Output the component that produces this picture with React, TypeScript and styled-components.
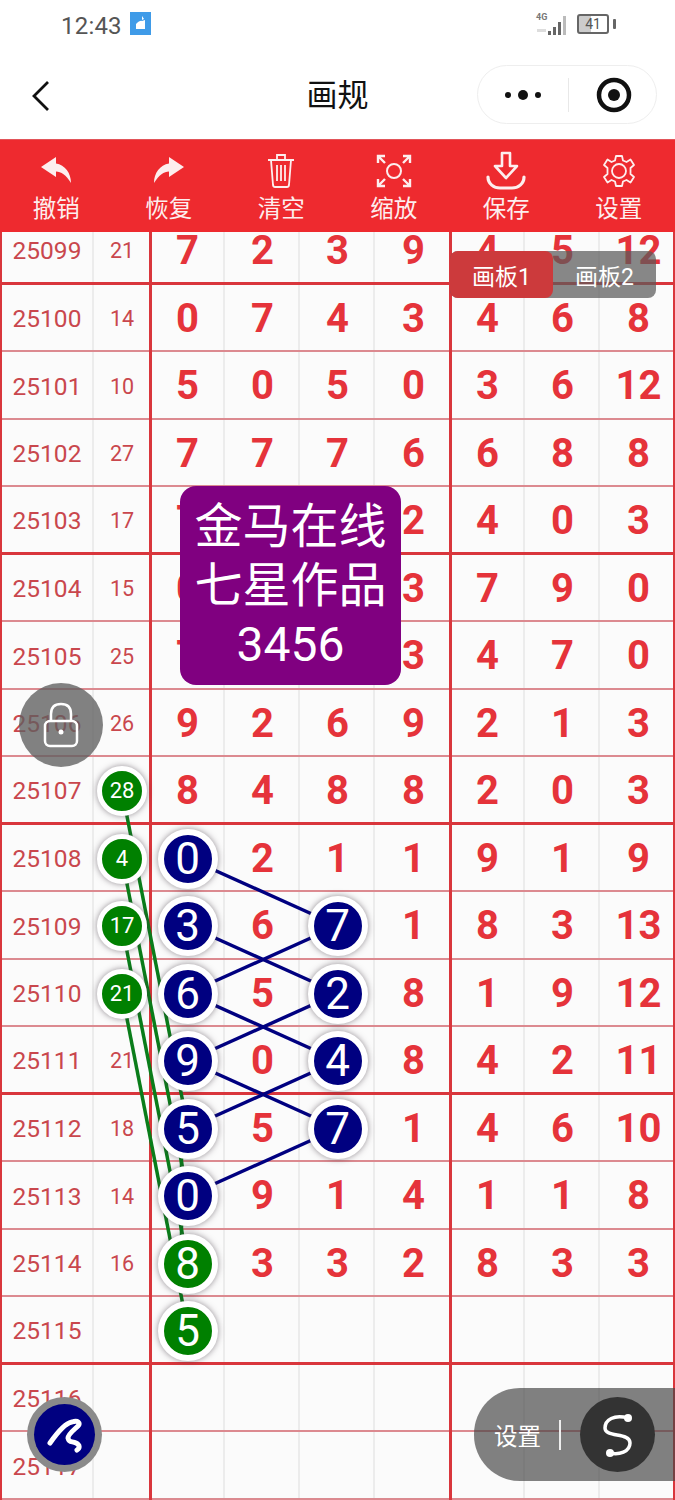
import React from "react";
import styled, { createGlobalStyle } from "styled-components";

const ROW_H = 67.5;
const Global = createGlobalStyle`
  html, body { margin: 0; padding: 0; background: #fff; }
  body { width: 675px; height: 1500px; overflow: hidden; font-family: Roboto, "Noto Sans CJK SC", sans-serif; }
  * { box-sizing: border-box; }
`;

const Page = styled.div`
  position: relative; width: 675px; height: 1500px; display: flex; flex-direction: column; overflow: hidden;
`;
const StatusBar = styled.div`
  height: 52px; flex: none; display: flex; align-items: center; padding: 0 59px 0 61px; color: #555;
`;
const Time = styled.span` font-size: 24px; line-height: 1; letter-spacing: .2px; `;
const AppBadge = styled.span`
  width: 21px; height: 23px; margin-left: 8px; background: #3f9be8; display: flex; align-items: center; justify-content: center; margin-top: -6px;
`;
const StatusRight = styled.div` margin-left: auto; display: flex; align-items: center; gap: 8px; margin-top: -4px; `;
const Signal = styled.div` position: relative; width: 34px; height: 24px; `;
const Tag4G = styled.span`
  position: absolute; left: 1px; top: 0; font-size: 9px; font-weight: 700; line-height: 11px; color: #777;
`;
const Battery = styled.div`
  width: 32px; height: 20px; border: 2px solid #666; border-radius: 3px; display: flex; align-items: center; justify-content: center;
  font-size: 14px; line-height: 1; color: #555; background: linear-gradient(90deg, #ccc 0 42%, #fff 42%);
`;
const BatteryNub = styled.span` width: 3px; height: 10px; background: #666; margin-left: -4px; border-radius: 1px; `;

const NavBar = styled.div`
  height: 87px; flex: none; display: flex; align-items: center; position: relative; padding: 0 18px 0 32px;
`;
const Title = styled.div`
  position: absolute; left: 0; right: 0; top: 24px; text-align: center; font-size: 31px; line-height: 40px; color: #111; font-weight: 400;
`;
const Capsule = styled.div`
  margin-left: auto; width: 180px; height: 59px; margin-top: -2px; border: 1px solid #eee; border-radius: 30px; display: flex; align-items: center;
`;
const CapsuleLeft = styled.div` width: 90px; flex: none; display: flex; align-items: center; justify-content: center; `;
const CapsuleRight = styled.div` flex: 1; display: flex; align-items: center; justify-content: center; padding-left: 3px; `;
const CapsuleSep = styled.div` width: 1px; height: 34px; background: #e8e8e8; `;

const Toolbar = styled.div`
  height: 93px; flex: none; background: #ee2a2f; display: grid; grid-template-columns: repeat(6, 1fr); padding-top: 11px; border-top: 1px solid #e2555a;
`;
const ToolItem = styled.div` display: flex; flex-direction: column; align-items: center; color: #fdeeee; `;
const ToolIcon = styled.div` height: 39px; width: 44px; display: flex; align-items: center; justify-content: center; `;
const ToolLabel = styled.div` font-size: 23.5px; line-height: 30px; margin-top: 4px; `;

const Viewport = styled.div` flex: 1; overflow: hidden; position: relative; background: #fbfbfb; `;
const Board = styled.div` position: relative; margin-top: -15px; `;
const Row = styled.div<{ $thick?: boolean }>`
  height: ${ROW_H}px; display: grid; grid-template-columns: 94px 56px repeat(7, 75px);
  border-bottom: ${(p) => (p.$thick ? "3px solid #d9363c" : "2px solid #dc8a90")};
`;
const Cell = styled.div<{ $edge?: boolean }>`
  position: relative; display: flex; align-items: center; justify-content: center; padding: 3px 0 0 2px;
  border-right: 2px solid #ececec;
  ${(p) => p.$edge && `
    border-right: none;
    &::after { content: ""; position: absolute; right: -2px; top: 0; bottom: -3px; width: 3px; background: #d9363c; z-index: 1; }
  `}
`;
const IssueCell = styled(Cell)`
  font-size: 24.5px; color: #c9474d;
  &::before { content: ""; position: absolute; left: 0; top: 0; bottom: -3px; width: 2px; background: #d9363c; }
`;
const SumCell = styled(Cell)` font-size: 21.5px; color: #c9474d; padding-left: 0; `;
const Digit = styled.span` font-size: 40px; font-weight: 700; color: #e5333a; line-height: 1; `;
const LastCell = styled(Cell)`
  border-right: none;
  &::after { content: ""; position: absolute; right: 0; top: 0; bottom: -3px; width: 2px; background: #d9363c; }
`;
const Ball = styled.span<{ $color: string; $small?: boolean }>`
  position: relative; z-index: 3; flex: none; display: flex; align-items: center; justify-content: center; border-radius: 50%;
  width: ${(p) => (p.$small ? 50 : 60)}px; height: ${(p) => (p.$small ? 50 : 60)}px;
  margin: 0 -5px;
  border: ${(p) => (p.$small ? 5 : 6)}px solid #fff; background: ${(p) => p.$color}; color: #fff;
  font-size: ${(p) => (p.$small ? 22 : 44)}px; line-height: 1; box-shadow: 0 0 6px rgba(60, 50, 60, .55);
`;
const Chart = styled.svg` position: absolute; left: 0; top: 0; z-index: 2; pointer-events: none; `;

const Stamp = styled.div`
  position: absolute; z-index: 5; left: 180px; top: 269px; width: 221px; height: 199px; border-radius: 16px; background: #800080; color: #fff;
  display: flex; flex-direction: column; align-items: center; justify-content: center; font-size: 48px; line-height: 59px;
`;
const Tabs = styled.div`
  position: absolute; z-index: 6; left: 450px; top: 19px; width: 206px; height: 47px; border-radius: 8px; background: rgba(90, 90, 90, .72); display: flex;
`;
const Tab = styled.div<{ $active?: boolean }>`
  flex: 1; display: flex; align-items: center; justify-content: center; font-size: 23px; color: #fff; border-radius: 8px;
  ${(p) => p.$active && "background: #cc3a3c; flex: none; width: 103px;"}
`;
const LockFab = styled.div`
  position: absolute; z-index: 6; left: 19px; top: 683px; width: 84px; height: 84px; border-radius: 50%; background: rgba(95, 95, 95, .78);
  display: flex; align-items: center; justify-content: center;
`;
const PenFab = styled.div`
  position: absolute; z-index: 6; left: 27px; top: 1397px; width: 75px; height: 75px; border-radius: 50%; background: #8a8a8a;
  display: flex; align-items: center; justify-content: center;
`;
const PenDisc = styled.div` width: 61px; height: 61px; border-radius: 50%; background: #000080; display: flex; align-items: center; justify-content: center; `;
const SettingsPill = styled.div`
  position: absolute; z-index: 6; left: 474px; top: 1388px; width: 201px; height: 93px; border-radius: 46px 0 0 46px; background: rgba(70, 70, 70, .68);
  display: flex; align-items: center; padding-left: 20px; color: #fff; font-size: 23.5px;
`;
const PillSep = styled.span` width: 2px; height: 30px; background: #eee; margin-left: 18px; `;
const PillDisc = styled.div`
  width: 75px; height: 75px; border-radius: 50%; background: #333; margin-left: 19px; display: flex; align-items: center; justify-content: center;
`;

type Mark = { v: string | number; b?: "n" | "g" };
const n = (v: number): Mark => ({ v, b: "n" });
const g = (v: number): Mark => ({ v, b: "g" });
const rows: { id: number; sum: Mark | null; cells: (Mark | number | null)[] }[] = [
  { id: 25099, sum: { v: 21 }, cells: [7, 2, 3, 9, 4, 5, 12] },
  { id: 25100, sum: { v: 14 }, cells: [0, 7, 4, 3, 4, 6, 8] },
  { id: 25101, sum: { v: 10 }, cells: [5, 0, 5, 0, 3, 6, 12] },
  { id: 25102, sum: { v: 27 }, cells: [7, 7, 7, 6, 6, 8, 8] },
  { id: 25103, sum: { v: 17 }, cells: [7, null, null, 2, 4, 0, 3] },
  { id: 25104, sum: { v: 15 }, cells: [0, null, null, 3, 7, 9, 0] },
  { id: 25105, sum: { v: 25 }, cells: [7, null, null, 3, 4, 7, 0] },
  { id: 25106, sum: { v: 26 }, cells: [9, 2, 6, 9, 2, 1, 3] },
  { id: 25107, sum: g(28), cells: [8, 4, 8, 8, 2, 0, 3] },
  { id: 25108, sum: g(4), cells: [n(0), 2, 1, 1, 9, 1, 9] },
  { id: 25109, sum: g(17), cells: [n(3), 6, n(7), 1, 8, 3, 13] },
  { id: 25110, sum: g(21), cells: [n(6), 5, n(2), 8, 1, 9, 12] },
  { id: 25111, sum: { v: 21 }, cells: [n(9), 0, n(4), 8, 4, 2, 11] },
  { id: 25112, sum: { v: 18 }, cells: [n(5), 5, n(7), 1, 4, 6, 10] },
  { id: 25113, sum: { v: 14 }, cells: [n(0), 9, 1, 4, 1, 1, 8] },
  { id: 25114, sum: { v: 16 }, cells: [g(8), 3, 3, 2, 8, 3, 3] },
  { id: 25115, sum: null, cells: [g(5), null, null, null, null, null, null] },
  { id: 25116, sum: null, cells: [null, null, null, null, null, null, null] },
  { id: 25117, sum: null, cells: [null, null, null, null, null, null, null] },
];
const thickIds = new Set([25099, 25103, 25107, 25111, 25115]);
const cy = (id: number) => (id - 25099 + 0.5) * ROW_H;
const X_SUM = 122, X_A = 188, X_B = 338;

const navy: [number, number][] = [
  [25108, 25109], [25109, 25110], [25110, 25109], [25110, 25111], [25111, 25110], [25111, 25112], [25112, 25111], [25113, 25112],
];
const green: [number, number][] = [[25107, 25112], [25108, 25113], [25109, 25114], [25110, 25115]];

const cellValue = (c: Mark | number | null) => {
  if (c === null) return null;
  if (typeof c === "number") return <Digit>{c}</Digit>;
  if (c.b) return <Ball $color={c.b === "n" ? "#000080" : "#008000"}>{c.v}</Ball>;
  return <Digit>{c.v}</Digit>;
};

const tools: [string, React.ReactNode][] = [
  ["撤销", <svg width="32" height="27" viewBox="0 0 32 27"><path d="M1 10 L16 0 V6.5 C25 8 31 16 31 26 C26 18 21 14.500 16 14.500 V20 Z" fill="currentColor" /></svg>],
  ["恢复", <svg width="32" height="27" viewBox="0 0 32 27"><path d="M31 10 L16 0 V6.5 C7 8 1 16 1 26 C6 18 11 14.500 16 14.500 V20 Z" fill="currentColor" /></svg>],
  ["清空", <svg width="30" height="36" viewBox="0 0 30 36" fill="none" stroke="currentColor" strokeWidth="1.8"><path d="M2 7 H28 M11 6 V2 H19 V6 M5 7 L7 32 Q7.300 34 9 34 H21 Q22.700 34 23 32 L25 7 M11 12 V28 M15 12 V28 M19 12 V28" /></svg>],
  ["缩放", <svg width="36" height="34" viewBox="0 0 36 34" fill="none" stroke="currentColor" strokeWidth="2.4"><circle cx="18" cy="17" r="7" strokeWidth="2" /><path d="M2 9 V2 H9 M2 2 L9 9 M34 9 V2 H27 M34 2 L27 9 M2 25 V32 H9 M2 32 L9 25 M34 25 V32 H27 M34 32 L27 25" /></svg>],
  ["保存", <svg width="40" height="40" viewBox="0 0 40 40" fill="none" stroke="currentColor" strokeWidth="2.600" strokeLinejoin="round" strokeLinecap="round"><path d="M16 2 H24 V15 H31 L20 27 L9 15 H16 Z" /><path d="M2 26 C2 33 8 37 14 37 H26 C32 37 38 33 38 26" strokeWidth="3.200" /></svg>],
  ["设置", <svg width="34" height="34" viewBox="0 0 34 34" fill="none" stroke="currentColor" strokeWidth="1.800" strokeLinejoin="round"><circle cx="17" cy="17" r="7" /><path d="M14 2 H20 L21 6.500 L24.500 8 L28.500 5.500 L32 11 L28.500 14 V20 L32 23 L28.500 28.500 L24.500 26 L21 27.500 L20 32 H14 L13 27.500 L9.500 26 L5.500 28.500 L2 23 L5.500 20 V14 L2 11 L5.500 5.500 L9.500 8 L13 6.500 Z" /></svg>],
];

export default function App() {
  return (
    <Page>
      <Global />
      <StatusBar>
        <Time>12:43</Time>
        <AppBadge>
          <svg width="15" height="17" viewBox="0 0 15 17"><path d="M3 9 Q7 5 9 6 L12 5 V14 H3 Z M9 1 L11 4 L9 5 Z" fill="#fff" /></svg>
        </AppBadge>
        <StatusRight>
          <Signal>
            <Tag4G>4G</Tag4G>
            <svg width="34" height="24" viewBox="0 0 34 24" fill="#666">
              <path d="M13 19 h3 v4 h-3z M18 15 h3 v8 h-3z M23 10 h3 v13 h-3z" />
              <path d="M28 4 h3 v19 h-3z" fill="#bbb" />
              <path d="M2 17 h9 v3 h-9z" fill="#ddd" />
            </svg>
          </Signal>
          <Battery>41</Battery>
          <BatteryNub />
        </StatusRight>
      </StatusBar>
      <NavBar>
        <svg width="18" height="32" viewBox="0 0 18 32" fill="none" stroke="#111" strokeWidth="2.800"><path d="M16 2 L2 16 L16 30" /></svg>
        <Title>画规</Title>
        <Capsule>
          <CapsuleLeft>
            <svg width="40" height="14" viewBox="0 0 40 14" fill="#111"><circle cx="5" cy="7" r="3" /><circle cx="20" cy="7" r="5" /><circle cx="35" cy="7" r="3" /></svg>
          </CapsuleLeft>
          <CapsuleSep />
          <CapsuleRight>
            <svg width="36" height="36" viewBox="0 0 36 36"><circle cx="18" cy="18" r="15" fill="none" stroke="#111" strokeWidth="4.500" /><circle cx="18" cy="18" r="6" fill="#111" /></svg>
          </CapsuleRight>
        </Capsule>
      </NavBar>
      <Toolbar>
        {tools.map(([label, icon]) => (
          <ToolItem key={label}>
            <ToolIcon>{icon}</ToolIcon>
            <ToolLabel>{label}</ToolLabel>
          </ToolItem>
        ))}
      </Toolbar>
      <Viewport>
        <Board>
          {rows.map((r) => (
            <Row key={r.id} $thick={thickIds.has(r.id)}>
              <IssueCell>{r.id}</IssueCell>
              <SumCell $edge>
                {r.sum && (r.sum.b ? <Ball $small $color="#008000">{r.sum.v}</Ball> : r.sum.v)}
              </SumCell>
              {r.cells.map((c, i) =>
                i === 6 ? (
                  <LastCell key={i}>{cellValue(c)}</LastCell>
                ) : (
                  <Cell key={i} $edge={i === 3}>{cellValue(c)}</Cell>
                )
              )}
            </Row>
          ))}
          <Chart width="675" height="1300" viewBox="0 0 675 1300" fill="none">
            {green.map(([a, b]) => (
              <line key={`g${a}`} x1={X_SUM} y1={cy(a)} x2={X_A} y2={cy(b)} stroke="#0a7d1a" strokeWidth="3.500" />
            ))}
            <line x1="181.500" y1={cy(25112)} x2="181.500" y2={cy(25114)} stroke="#0a7d1a" strokeWidth="3.500" />
            {navy.map(([a, b]) => (
              <line key={`n${a}${b}`} x1={X_A} y1={cy(a)} x2={X_B} y2={cy(b)} stroke="#000080" strokeWidth="3.500" />
            ))}
          </Chart>
          <Stamp>
            <span>金马在线</span>
            <span>七星作品</span>
            <span>3456</span>
          </Stamp>
        </Board>
        <Tabs>
          <Tab $active>画板1</Tab>
          <Tab>画板2</Tab>
        </Tabs>
      </Viewport>
      <LockFab>
        <svg width="38" height="46" viewBox="0 0 38 46" fill="none" stroke="#fff" strokeWidth="2.500">
          <path d="M9 20 V12 C9 5 13 2 19 2 C25 2 29 5 29 12 V20" />
          <rect x="3" y="19" width="32" height="25" rx="5" />
          <circle cx="19" cy="30" r="2.500" fill="#fff" stroke="none" />
        </svg>
      </LockFab>
      <PenFab>
        <PenDisc>
          <svg width="60" height="60" viewBox="0 0 60 60" fill="none" stroke="#fff" strokeWidth="5" strokeLinecap="round" strokeLinejoin="round">
            <path d="M15 38 C22 28 31 18 37 17 C43 15 46 18 43 21 C39 25 33 29 33 33 C34 38 37 36 41 38 C45 40 45 43 42 45" />
          </svg>
        </PenDisc>
      </PenFab>
      <SettingsPill>
        设置
        <PillSep />
        <PillDisc>
          <svg width="74" height="74" viewBox="0 0 74 74" fill="none" stroke="#fff" strokeWidth="3.500" strokeLinecap="round">
            <path d="M47 20 C33 16 24 22 24 30 C24 40 49 34 49 45 C49 54 38 57 29 55" />
            <circle cx="47" cy="20" r="4" fill="#fff" stroke="none" />
            <circle cx="29" cy="55" r="4" fill="#fff" stroke="none" />
          </svg>
        </PillDisc>
      </SettingsPill>
    </Page>
  );
}
